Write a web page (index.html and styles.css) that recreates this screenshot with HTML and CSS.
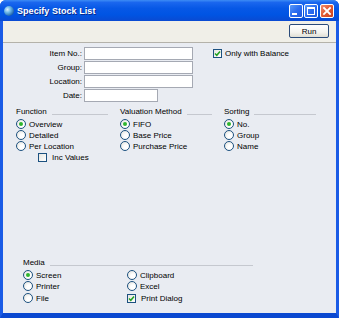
FILE: index.html
```html
<!DOCTYPE html>
<html>
<head>
<meta charset="utf-8">
<link rel="stylesheet" href="styles.css">
</head>
<body>
<div class="window">
  <div class="titlebar">
    <span class="app-icon"></span>
    <span class="title">Specify Stock List</span>
    <div class="tb-buttons">
      <span class="tb-btn tb-min"><svg width="12" height="12" viewBox="0 0 12 12"><rect x="2" y="8" width="5" height="2" fill="#fff"/></svg></span>
      <span class="tb-btn tb-max"><svg width="12" height="12" viewBox="0 0 12 12"><rect x="2.5" y="2.5" width="7" height="7" fill="none" stroke="#fff" stroke-width="1"/><rect x="2" y="2" width="8" height="2" fill="#fff"/></svg></span>
      <span class="tb-btn tb-close"><svg width="12" height="12" viewBox="0 0 12 12"><path d="M3 3 L9 9 M9 3 L3 9" stroke="#fff" stroke-width="1.8" stroke-linecap="square"/></svg></span>
    </div>
  </div>
  <div class="frame">
    <div class="toolbar">
      <button class="run-btn">Run</button>
    </div>
    <div class="content">
      <div class="top-row">
        <div class="fields">
          <label class="flabel">Item No.:</label><span class="input wide"></span>
          <label class="flabel">Group:</label><span class="input wide"></span>
          <label class="flabel">Location:</label><span class="input wide"></span>
          <label class="flabel">Date:</label><span class="input short"></span>
        </div>
        <div class="opt-check">
          <span class="check checked"><svg width="7" height="7" viewBox="0 0 7 7"><path d="M1 3.5 L2.8 5.3 L6 1.5" fill="none" stroke="#21a121" stroke-width="1.5"/></svg></span>
          <span>Only with Balance</span>
        </div>
      </div>

      <div class="groups">
        <div class="group">
          <div class="ghead"><span>Function</span><span class="gline"></span></div>
          <div class="opt"><span class="radio on"></span><span>Overview</span></div>
          <div class="opt"><span class="radio"></span><span>Detailed</span></div>
          <div class="opt"><span class="radio"></span><span>Per Location</span></div>
          <div class="opt sub"><span class="check"></span><span>Inc Values</span></div>
        </div>
        <div class="group">
          <div class="ghead"><span>Valuation Method</span><span class="gline"></span></div>
          <div class="opt"><span class="radio on"></span><span>FIFO</span></div>
          <div class="opt"><span class="radio"></span><span>Base Price</span></div>
          <div class="opt"><span class="radio"></span><span>Purchase Price</span></div>
        </div>
        <div class="group">
          <div class="ghead"><span>Sorting</span><span class="gline"></span></div>
          <div class="opt"><span class="radio on"></span><span>No.</span></div>
          <div class="opt"><span class="radio"></span><span>Group</span></div>
          <div class="opt"><span class="radio"></span><span>Name</span></div>
        </div>
      </div>

      <div class="media">
        <div class="ghead"><span>Media</span><span class="gline"></span></div>
        <div class="media-cols">
          <div class="mcol">
            <div class="opt m"><span class="radio on"></span><span>Screen</span></div>
            <div class="opt m"><span class="radio"></span><span>Printer</span></div>
            <div class="opt m"><span class="radio"></span><span>File</span></div>
          </div>
          <div class="mcol">
            <div class="opt m"><span class="radio"></span><span>Clipboard</span></div>
            <div class="opt m"><span class="radio"></span><span>Excel</span></div>
            <div class="opt m"><span class="check checked"><svg width="7" height="7" viewBox="0 0 7 7"><path d="M1 3.5 L2.8 5.3 L6 1.5" fill="none" stroke="#21a121" stroke-width="1.5"/></svg></span><span>Print Dialog</span></div>
          </div>
        </div>
      </div>
    </div>
  </div>
</div>
</body>
</html>
```

FILE: styles.css
```css
html, body {
  margin: 0;
  padding: 0;
  background: #ffffff;
}
body {
  font-family: "Liberation Sans", Arial, sans-serif;
  font-size: 8px;
  color: #000;
}
.window {
  width: 339px;
  height: 318px;
  display: flex;
  flex-direction: column;
  background: #0a50dc;
  border-radius: 6px 6px 0 0;
  overflow: hidden;
}
.titlebar {
  height: 21px;
  flex: none;
  display: flex;
  align-items: center;
  background: linear-gradient(to bottom, #3d8cf5 0%, #1a66ee 12%, #0758e6 40%, #0054e3 70%, #0a4ad2 100%);
  padding-left: 4px;
  padding-right: 5px;
}
.app-icon {
  width: 10px;
  height: 10px;
  border-radius: 50%;
  background: radial-gradient(circle at 35% 35%, #d8f0ff 0%, #6ab6e6 35%, #1b5fa8 75%, #0e3d7a 100%);
  flex: none;
}
.title {
  margin-left: 3px;
  color: #fff;
  font-weight: bold;
  font-size: 9px;
  text-shadow: 1px 1px 0 #0a2a8a;
  letter-spacing: 0.05px;
}
.tb-buttons {
  margin-left: auto;
  display: flex;
  gap: 1px;
  margin-top: 1px;
}
.tb-btn {
  width: 14px;
  height: 14px;
  box-sizing: border-box;
  border: 1px solid #fff;
  border-radius: 2px;
  display: flex;
  align-items: center;
  justify-content: center;
  background: linear-gradient(to bottom right, #5a9af8 0%, #2a6cf0 50%, #1d58dc 100%);
}
.tb-close {
  margin-left: 1px;
  background: linear-gradient(to bottom right, #ee8b6c 0%, #e25a33 50%, #c7401c 100%);
}
.frame {
  flex: 1;
  display: flex;
  flex-direction: column;
  border-left: 3px solid #1a5be6;
  border-right: 3px solid #1a5be6;
  border-bottom: 5px solid #0a48d0;
  min-height: 0;
}
.toolbar {
  height: 21px;
  flex: none;
  background: #f0efe8;
  border-bottom: 1px solid #b4b2aa;
  display: flex;
  justify-content: flex-end;
  align-items: flex-start;
  padding-top: 3px;
  padding-right: 7px;
  box-sizing: border-box;
  height: 22px;
}
.run-btn {
  width: 40px;
  height: 14px;
  box-sizing: border-box;
  border: 1px solid #2b4b7a;
  border-radius: 2px;
  background: linear-gradient(to bottom, #ffffff 0%, #f4f3ee 60%, #e0ded4 100%);
  font-family: "Liberation Sans", Arial, sans-serif;
  font-size: 8px;
  padding: 0;
  color: #000;
}
.content {
  flex: 1;
  background: #e9ecf2;
  display: flex;
  flex-direction: column;
  padding: 4px 0 9px 13px;
}
.top-row {
  display: flex;
  align-items: flex-start;
}
.fields {
  display: grid;
  grid-template-columns: 66px 109px;
  column-gap: 2px;
  row-gap: 1px;
  align-items: center;
}
.flabel {
  text-align: right;
  line-height: 13px;
}
.input {
  height: 13px;
  box-sizing: border-box;
  background: #fff;
  border: 1px solid #a5a9b3;
  display: block;
}
.input.short {
  width: 74px;
}
.opt-check {
  margin-left: 20px;
  margin-top: 1px;
  display: flex;
  align-items: center;
  gap: 3px;
  height: 10px;
}
.check {
  width: 9px;
  height: 9px;
  box-sizing: border-box;
  border: 1px solid #1c5180;
  background: linear-gradient(to bottom right, #e6e6e0, #ffffff);
  display: inline-flex;
  align-items: center;
  justify-content: center;
  flex: none;
}
.radio {
  width: 10px;
  height: 10px;
  box-sizing: border-box;
  border: 1px solid #1c5180;
  border-radius: 50%;
  background: radial-gradient(circle at 65% 65%, #ffffff 30%, #dcdcd5 100%);
  display: inline-flex;
  align-items: center;
  justify-content: center;
  flex: none;
}
.radio.on::after {
  content: "";
  width: 4px;
  height: 4px;
  border-radius: 50%;
  background: #2fb52f;
}
.groups {
  display: flex;
  gap: 12px;
  margin-top: 5px;
}
.group {
  width: 92px;
}
.ghead {
  display: flex;
  align-items: flex-end;
  height: 10px;
  line-height: 10px;
}
.gline {
  flex: 1;
  height: 1px;
  background: #c5c8cf;
  margin-left: 5px;
  margin-bottom: 2px;
}
.group .ghead {
  margin-bottom: 2px;
}
.opt {
  display: flex;
  align-items: center;
  height: 11px;
  gap: 3px;
}
.opt .radio {
  align-self: flex-start;
}
.opt.sub {
  padding-left: 22px;
  height: 11px;
  align-items: center;
}
.opt.sub .check {
  margin-right: 2px;
}
.media {
  margin-top: auto;
  margin-left: 7px;
  width: 230px;
}
.media .ghead {
  margin-bottom: 2px;
}
.media-cols {
  display: flex;
  gap: 0;
}
.mcol {
  width: 104px;
}
.opt.m {
  height: 11.5px;
}
.mcol .check {
  margin-right: 2px;
}
```
